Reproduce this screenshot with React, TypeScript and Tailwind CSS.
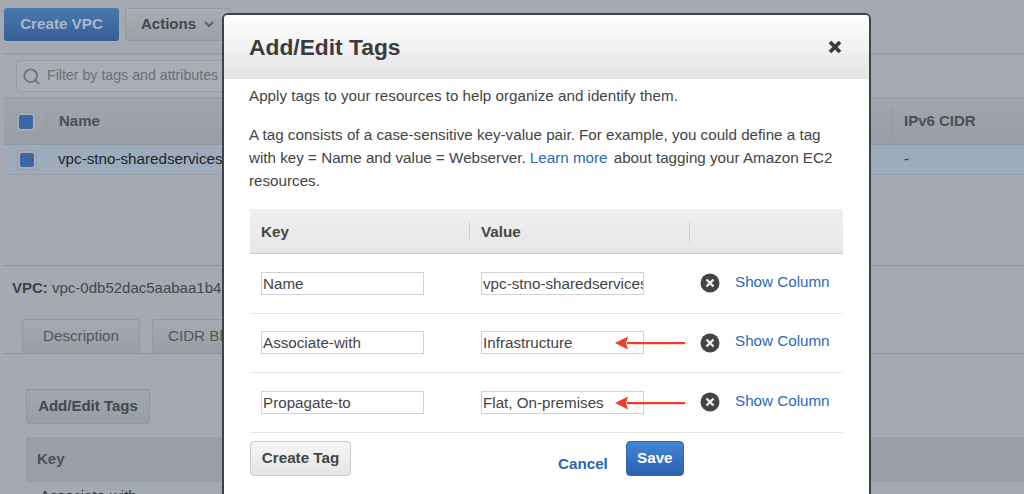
import { Search } from "lucide-react";

const font = { fontFamily: '"Liberation Sans", Arial, sans-serif' };

const rows = [
  { k: "Name", v: "vpc-stno-sharedservices", arrow: false },
  { k: "Associate-with", v: "Infrastructure", arrow: true },
  { k: "Propagate-to", v: "Flat, On-premises", arrow: true },
];

function RemoveIcon() {
  return (
    <svg width="20" height="20" viewBox="0 0 20 20" className="shrink-0">
      <circle cx="10" cy="10" r="9.5" fill="#444" />
      <path d="M6.5 6.5 13.5 13.5M13.5 6.5 6.5 13.5" stroke="#f2f2f2" strokeWidth="2.4" />
    </svg>
  );
}

function Arrow() {
  return (
    <svg width="70" height="14" viewBox="0 0 70 14" className="absolute left-[133px] top-[4px]">
      <path d="M12 6h58v2.2H12z" fill="#ee3e24" />
      <path d="M0 7 13 0.5 11 7 13 13.5z" fill="#ee3e24" />
    </svg>
  );
}

function Checkbox() {
  return (
    <div className="flex h-[20px] w-[20px] items-center justify-center rounded-[4px] border border-[#979ba3] bg-[#a9adb5]">
      <div className="h-[14px] w-[14px] rounded-[2px] bg-[#3a69a4]" />
    </div>
  );
}

export default function App() {
  return (
    <div className="relative h-[494px] w-[1024px] overflow-hidden bg-[#a5a9b1] text-[#2f3238]" style={font}>
      {/* Page behind the dialog */}
      <div className="flex gap-[6px] pl-[4px] pt-[8px]">
        <div className="flex h-[33px] w-[115px] items-center justify-center rounded-[3px] bg-gradient-to-b from-[#4a78ad] to-[#365f96] text-[15.2px] font-bold text-[#a9b7c9]">
          Create VPC
        </div>
        <div className="flex h-[33px] w-[106px] items-center gap-[8px] rounded-[3px] border border-[#94989f] bg-gradient-to-b from-[#a9adb4] to-[#9b9fa6] pl-[15px] text-[15px] font-bold text-[#44474d]">
          Actions
          <svg width="10" height="7" viewBox="0 0 10 7">
            <path d="M1 1 5 5 9 1" fill="none" stroke="#5e6269" strokeWidth="2" />
          </svg>
        </div>
      </div>
      <div className="ml-[4px] mt-[12px] flex h-[46px] items-center border-y-[2px] border-[#9a9ea6] bg-[#a6aab2] pl-[12px]">
        <div className="flex h-[32px] w-[600px] items-center gap-[6px] rounded-[3px] border border-[#9a9ea6] bg-[#a9adb5] pl-[5px] text-[14.2px] text-[#6c7077]">
          <Search size={19} strokeWidth={2.4} color="#70747b" />
          Filter by tags and attributes
        </div>
      </div>
      <div className="ml-[4px] flex h-[46px] items-center border-b border-[#94989f] bg-gradient-to-b from-[#a1a5ad] to-[#999da5]">
        <div className="ml-[12px] flex w-[31px] items-center border-r border-[#94989f]">
          <Checkbox />
          <div className="h-[20px]" />
        </div>
        <div className="ml-[12px] w-[833px] text-[15px] font-bold text-[#4c4f55]">Name</div>
        <div className="flex h-[30px] items-center border-l border-[#94989f] pl-[11px] text-[15px] font-bold text-[#4c4f55]">
          IPv6 CIDR
        </div>
      </div>
      <div className="ml-[4px] flex h-[30px] items-center border-b border-[#9a9ea6] bg-[#9eabbb]">
        <div className="ml-[13px]">
          <Checkbox />
        </div>
        <div className="ml-[21px] w-[846px] text-[15.2px] text-[#22252b]">vpc-stno-sharedservices</div>
        <div className="text-[15px] text-[#33363c]">-</div>
      </div>
      <div className="ml-[4px] mt-[90px] border-t border-[#8f939a] pl-[8px] pt-[12px] text-[15px] leading-[20px]">
        <span className="font-bold text-[#3f4248]">VPC:</span>{" "}
        <span className="text-[#44474d]">vpc-0db52dac5aabaa1b4</span>
      </div>
      <div className="ml-[4px] mt-[21px] flex h-[35px] gap-[12px] border-b border-[#8f939a] pl-[18px]">
        <div className="flex w-[118px] items-center justify-center rounded-t-[3px] border border-b-0 border-[#94989f] bg-gradient-to-b from-[#a5a9b1] to-[#999da5] text-[15.2px] text-[#53565c]">
          Description
        </div>
        <div className="flex w-[118px] items-center justify-center rounded-t-[3px] border border-b-0 border-[#94989f] bg-gradient-to-b from-[#a5a9b1] to-[#999da5] text-[15.2px] text-[#53565c]">
          CIDR Blocks
        </div>
      </div>
      <div className="ml-[26px] mt-[35px] flex h-[35px] w-[124px] items-center justify-center rounded-[4px] border border-[#8f939a] bg-gradient-to-b from-[#a3a7af] to-[#989ca4] text-[15px] font-bold text-[#44474d]">
        Add/Edit Tags
      </div>
      <div className="ml-[26px] mt-[13px] flex h-[45px] items-center bg-[#9a9ea6] pl-[11px] text-[15px] font-bold text-[#4c4f55]">
        Key
      </div>
      <div className="ml-[40px] pt-[3px] text-[15px] text-[#33363c]">Associate-with</div>

      {/* Add/Edit Tags dialog */}
      <div className="absolute left-[222px] top-[13px] h-[500px] w-[649px] rounded-t-[6px] border-x-[2px] border-t-[2px] border-[#3e4147] bg-white text-[#444]">
        <div className="flex h-[64px] items-center justify-between rounded-t-[4px] bg-gradient-to-b from-white to-[#e3e3e3] pl-[25px] pr-[27px]">
          <div className="text-[22.8px] font-bold text-[#3b3b3b]">Add/Edit Tags</div>
          <svg width="14" height="14" viewBox="0 0 14 14">
            <path d="M2 2 12 12M12 2 2 12" stroke="#3b3b3b" strokeWidth="3.8" />
          </svg>
        </div>
        <div className="px-[25px] pt-[5px] text-[15.2px] leading-[23px]">
          <p>Apply tags to your resources to help organize and identify them.</p>
          <p className="mt-[16px]">
            A tag consists of a case-sensitive key-value pair. For example, you could define a tag
            <br />
            with key = Name and value = Webserver. <span className="mr-[2px] text-[#2a6ab8]">Learn more</span> about tagging your Amazon EC2
            <br />
            resources.
          </p>
        </div>
        <div className="ml-[26px] mt-[17px] w-[593px]">
          <div className="flex h-[45px] items-center border-b border-[#c8c8c8] bg-gradient-to-b from-[#f0f0f0] to-[#e6e6e6] pt-[2px] text-[15.2px] font-bold text-[#444]">
            <div className="w-[219px] pl-[11px]">Key</div>
            <div className="flex h-[20px] w-[221px] items-center border-x border-[#d2d2d2] pl-[11px]">Value</div>
          </div>
          {rows.map((row) => (
            <div key={row.k} className="flex h-[59.5px] items-center border-b border-[#e6e6e6]">
              <div className="ml-[11px] h-[23px] w-[163px] overflow-hidden whitespace-nowrap border border-[#d2d2d2] pl-[1px] text-[15.2px] leading-[21px]">
                {row.k}
              </div>
              <div className="relative ml-[57px] h-[23px] w-[163px] whitespace-nowrap border border-[#d2d2d2] pl-[1px] text-[15.2px] leading-[21px]">
                <div className="overflow-hidden pr-[1px]">{row.v}</div>
                {row.arrow && <Arrow />}
              </div>
              <div className="ml-[56px]">
                <RemoveIcon />
              </div>
              <div className="ml-[15px] whitespace-nowrap pb-[2px] text-[15.2px] text-[#2a6ab8]">Show Column</div>
            </div>
          ))}
          <div className="flex items-start pt-[8px]">
            <div className="flex h-[35px] w-[101px] items-center justify-center rounded-[4px] border border-[#c8c8c8] bg-gradient-to-b from-[#f6f6f6] to-[#e4e4e4] pt-[1px] text-[15.2px] font-bold text-[#444]">
              Create Tag
            </div>
            <div className="ml-[207px] pt-[12px] text-[15.2px] font-bold text-[#2a63ad]">Cancel</div>
            <div className="ml-[18px] flex h-[35px] w-[58px] items-center justify-center rounded-[4px] border border-[#2f68b0] bg-gradient-to-b from-[#4384d6] to-[#2b62ae] pt-[1px] text-[15.2px] font-bold text-white">
              Save
            </div>
          </div>
        </div>
      </div>
    </div>
  );
}
